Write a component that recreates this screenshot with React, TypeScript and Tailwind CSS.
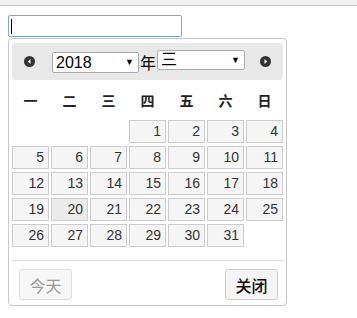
const WEEK = ["一", "二", "三", "四", "五", "六", "日"];
// March 2018 starts on Thursday
const LEAD = 3;
const DAYS = 31;

function Arrow({ dir }: { dir: "left" | "right" }) {
  return (
    <svg width="11" height="11" viewBox="0 0 11 11">
      <circle cx="5.5" cy="5.5" r="5.5" fill="#333" />
      {dir === "left" ? (
        <path d="M6.5 3 L3.8 5.5 L6.5 8 Z" fill="#fff" />
      ) : (
        <path d="M4.5 3 L7.2 5.5 L4.5 8 Z" fill="#fff" />
      )}
    </svg>
  );
}

function FakeSelect({ value, className }: { value: string; className: string }) {
  return (
    <div
      className={`flex items-center justify-between bg-white border border-[#a9a9a9] rounded-[2px] pl-[3px] pr-[4px] text-[16px] leading-none text-black ${className}`}
    >
      <span>{value}</span>
      <span className="text-[9px] leading-none">▼</span>
    </div>
  );
}

export default function App() {
  const cells: (number | null)[] = [];
  for (let i = 0; i < LEAD; i++) cells.push(null);
  for (let d = 1; d <= DAYS; d++) cells.push(d);

  return (
    <div
      className="w-[357px] h-[318px] bg-white overflow-hidden"
      style={{ fontFamily: '"Liberation Sans", Arial, "Noto Sans CJK SC", sans-serif' }}
    >
      <div className="h-[6px] bg-[#f0f0f0] border-b border-[#c6c6c6]" />
      <div className="pl-[8px] pt-[9px]">
        {/* focused text input */}
        <div className="w-[174px] h-[22px] border border-[#7ea4dc] rounded-[2px] flex items-center pl-[2px]">
          <div className="w-px h-[15px] bg-black" />
        </div>

        {/* date picker popup */}
        <div className="mt-px w-[279px] h-[268px] border border-[#c8c8c8] rounded-[4px] bg-white px-[3px] pt-[4px] flex flex-col">
          <div className="h-[37px] bg-[#e8e8e8] rounded-[4px] flex items-center pl-[12px] pr-[12px]">
            <Arrow dir="left" />
            <FakeSelect value="2018" className="ml-[17px] w-[87px] h-[21px] mt-[2px]" />
            <span
              className="text-[16px] leading-none text-black mx-px"
              style={{ fontFamily: '"Noto Sans CJK SC", sans-serif' }}
            >
              年
            </span>
            <FakeSelect value="三" className="w-[88px] h-[20px] -mt-[3px]" />
            <div className="flex-1" />
            <Arrow dir="right" />
          </div>

          <div className="grid grid-cols-7 gap-x-[2px] h-[40px] items-center">
            {WEEK.map((w) => (
              <div
                key={w}
                className="text-center text-[14px] font-bold text-[#222]"
                style={{ fontFamily: '"Noto Sans CJK SC", sans-serif' }}
              >
                {w}
              </div>
            ))}
          </div>

          <div className="grid grid-cols-[repeat(7,37px)] gap-x-[2px] gap-y-[3px]">
            {cells.map((d, i) =>
              d === null ? (
                <div key={i} className="h-[23px]" />
              ) : (
                <div
                  key={i}
                  className={`h-[23px] border border-[#cccccc] text-right pr-[4px] text-[14px] leading-[21px] text-[#333] ${
                    d === 20 ? "bg-[#ebebeb]" : "bg-[#f5f5f5]"
                  }`}
                >
                  {d}
                </div>
              )
            )}
          </div>

          <div className="mt-[13px] border-t border-[#dddddd] flex justify-between pl-[7px] pr-[5px] pt-[8px]">
            <button
              className="w-[53px] h-[31px] border border-[#dddddd] rounded-[3px] bg-[#f7f7f7] text-[16px] text-[#999]"
              style={{ fontFamily: '"Noto Sans CJK SC", sans-serif' }}
            >
              今天
            </button>
            <button
              className="w-[53px] h-[31px] border border-[#cccccc] rounded-[3px] bg-[#f5f5f5] text-[16px] text-[#111] font-medium"
              style={{ fontFamily: '"Noto Sans CJK SC", sans-serif' }}
            >
              关闭
            </button>
          </div>
        </div>
      </div>
    </div>
  );
}
